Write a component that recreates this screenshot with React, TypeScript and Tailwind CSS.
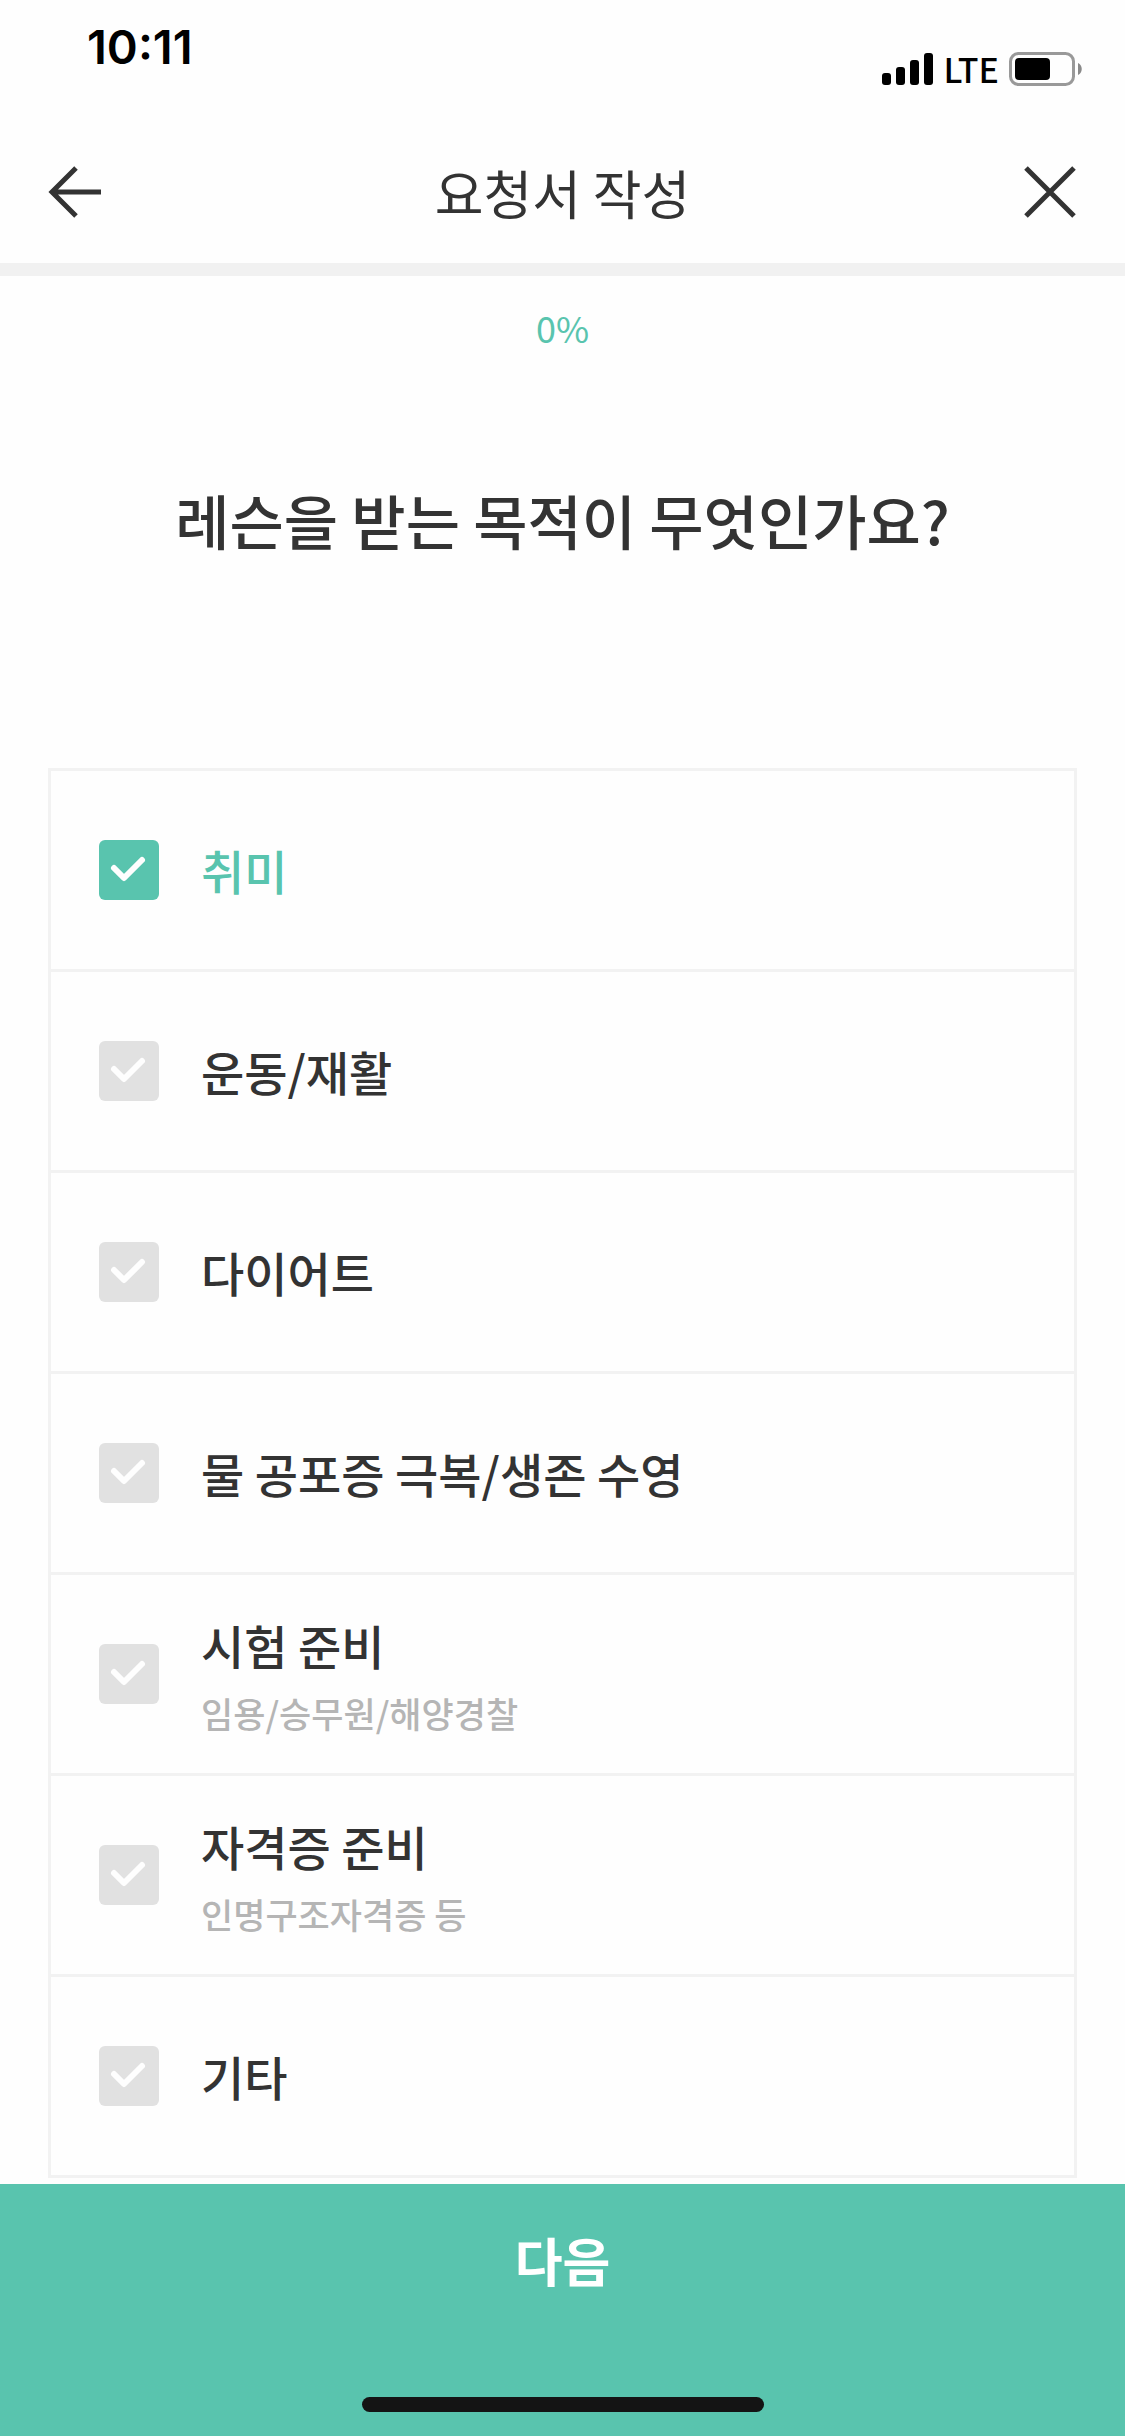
import { useState } from "react";

type Option = { id: string; label: string; hint?: string };

const OPTIONS: Option[] = [
  { id: "hobby", label: "취미" },
  { id: "exercise", label: "운동/재활" },
  { id: "diet", label: "다이어트" },
  { id: "survival", label: "물 공포증 극복/생존 수영" },
  { id: "exam", label: "시험 준비", hint: "임용/승무원/해양경찰" },
  { id: "license", label: "자격증 준비", hint: "인명구조자격증 등" },
  { id: "etc", label: "기타" },
];

function StatusBar() {
  return (
    <div className="flex h-[132px] justify-between pr-[43px] pl-[87px] text-black">
      <span className="pt-5 font-['Inter',sans-serif] text-[47px] leading-[54px] font-semibold">10:11</span>
      <div className="flex h-[138px] items-center gap-2.5">
        <svg width="51" height="33" viewBox="0 0 51 33" aria-hidden="true">
          <rect x="0" y="20" width="9" height="12" rx="3" />
          <rect x="14" y="14" width="9" height="18" rx="3" />
          <rect x="28" y="7" width="9" height="25" rx="3" />
          <rect x="42" y="0" width="9" height="32" rx="3" />
        </svg>
        <span className="text-[34px] leading-10 font-medium">LTE</span>
        <svg width="73" height="34" viewBox="0 0 73 34" aria-hidden="true">
          <rect x="1.5" y="1.5" width="63" height="31" rx="8" fill="none" stroke="#999" strokeWidth="3" />
          <rect x="6" y="6" width="35" height="22" rx="4" />
          <path d="M69 11c5 2 5 10 0 12z" fill="#8a8a8a" />
        </svg>
      </div>
    </div>
  );
}

function Header() {
  return (
    <header className="flex h-[131px] items-start justify-between px-12 pt-[34px]">
      <button type="button" aria-label="뒤로">
        <svg width="54" height="52" viewBox="0 0 54 52" fill="none" stroke="#333" strokeWidth="5" aria-hidden="true">
          <path d="M53 26H5M28 2L4 26l24 24" />
        </svg>
      </button>
      <h1 className="text-[53px] leading-[52px]">요청서 작성</h1>
      <button type="button" aria-label="닫기">
        <svg width="54" height="52" viewBox="0 0 54 52" fill="none" stroke="#333" strokeWidth="5" aria-hidden="true">
          <path d="M3 2l48 48M51 2L3 50" />
        </svg>
      </button>
    </header>
  );
}

function OptionRow({ option, checked, onToggle }: { option: Option; checked: boolean; onToggle: () => void }) {
  return (
    <li className="border-b-[3px] border-[#f2f2f2]">
      <label className="flex h-[198px] cursor-pointer items-center gap-[42px] px-12">
        <span className="relative h-[60px] w-[60px] shrink-0">
          <input
            type="checkbox"
            checked={checked}
            onChange={onToggle}
            className="block h-[60px] w-[60px] appearance-none rounded-md bg-[#e1e1e1] checked:bg-[#59c4ae]"
          />
          <svg className="pointer-events-none absolute inset-0" width="60" height="60" viewBox="0 0 60 60" fill="none" stroke="#fefefe" strokeWidth="6" strokeLinecap="round" strokeLinejoin="round" aria-hidden="true">
            <path d="M15 28l10 10L43 20" />
          </svg>
        </span>
        <span className={option.hint ? "flex flex-col gap-2 pt-2.5" : "flex flex-col"}>
          <span className={checked ? "text-[47px] leading-[60px] font-medium text-[#59c4ae]" : "text-[47px] leading-[60px] font-medium"}>
            {option.label}
          </span>
          {option.hint ? <span className="text-[35px] leading-[60px] font-medium text-[#b5b5b5]">{option.hint}</span> : null}
        </span>
      </label>
    </li>
  );
}

export default function App() {
  const [selected, setSelected] = useState<string[]>(["hobby"]);

  function toggle(id: string) {
    setSelected((prev) => (prev.includes(id) ? prev.filter((item) => item !== id) : [...prev, id]));
  }

  return (
    <div className="flex min-h-screen flex-col bg-[#fefefe] font-['Noto_Sans_CJK_KR',sans-serif] text-[#333]">
      <StatusBar />
      <Header />
      <div className="h-[13px] bg-[#f1f1f1]" />
      <main className="flex-1 px-12 pb-1.5">
        <p className="pt-6 text-center text-[36px] leading-[54px] text-[#59c4ae]">0%</p>
        <h2 className="pt-[126px] pb-[208px] text-center text-[59px] leading-20 font-medium">레슨을 받는 목적이 무엇인가요?</h2>
        <ul className="border-x-[3px] border-t-[3px] border-[#f2f2f2]">
          {OPTIONS.map((option) => (
            <OptionRow key={option.id} option={option} checked={selected.includes(option.id)} onToggle={() => toggle(option.id)} />
          ))}
        </ul>
      </main>
      <footer className="flex h-[252px] flex-col items-center justify-between bg-[#59c4ae] pb-6">
        <button type="button" className="h-[152px] w-full text-[52px] font-bold text-white">다음</button>
        <div className="h-[15px] w-[402px] rounded-full bg-[#141414]" />
      </footer>
    </div>
  );
}
